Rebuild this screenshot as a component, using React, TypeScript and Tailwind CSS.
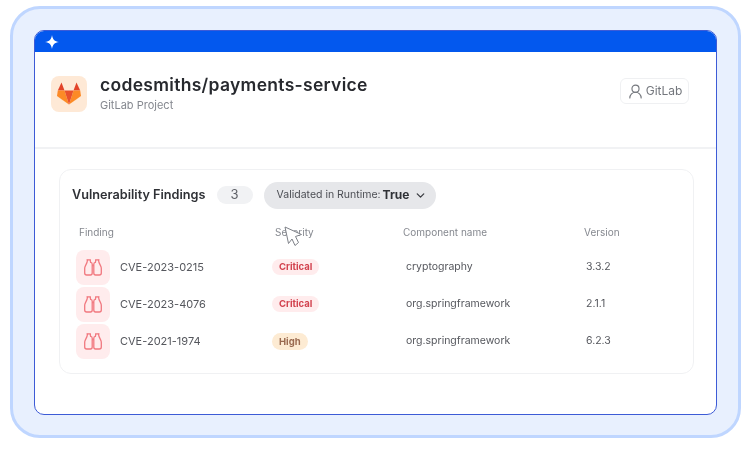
import { ChevronDown, UserRound } from 'lucide-react';

const findings = [
  { id: 'CVE-2023-0215', severity: 'Critical', component: 'cryptography', version: '3.3.2' },
  { id: 'CVE-2023-4076', severity: 'Critical', component: 'org.springframework', version: '2.1.1' },
  { id: 'CVE-2021-1974', severity: 'High', component: 'org.springframework', version: '6.2.3' },
];

function GitLabLogo() {
  return (
    <svg width="24" height="23" viewBox="0 0 24 23">
      <path d="M4.5 0.5 L7.5 8.5 L0.8 8.5 Z" fill="#e24329" />
      <path d="M19.5 0.5 L16.5 8.5 L23.2 8.5 Z" fill="#e24329" />
      <path d="M0.8 8.5 L7.5 8.5 L12 22.5 L0 14 Z" fill="#fc8a26" />
      <path d="M23.2 8.5 L16.5 8.5 L12 22.5 L24 14 Z" fill="#fc8a26" />
      <path d="M0 14 L4 17 L12 22.5 Z" fill="#fca326" />
      <path d="M24 14 L20 17 L12 22.5 Z" fill="#fca326" />
      <path d="M7.5 8.5 L16.5 8.5 L12 22.5 Z" fill="#e8502b" />
    </svg>
  );
}

function Binoculars() {
  return (
    <svg width="18" height="17" viewBox="0 0 18 17" fill="none" stroke="#f1787f" strokeWidth="1.3" strokeLinejoin="round">
      <path d="M3 0.8 H6.4 M11.6 0.8 H15" strokeLinecap="round" />
      <path d="M3.6 0.8 Q3.4 3.6 1.4 6.8 Q0.7 8 0.7 9.4 V14 Q0.7 16 2.7 16 H6.4 Q8.2 16 8.2 14 V5.2 Q8.2 3.6 6.6 3.4 L6.2 0.8" />
      <path d="M14.4 0.8 Q14.6 3.6 16.6 6.8 Q17.3 8 17.3 9.4 V14 Q17.3 16 15.3 16 H11.6 Q9.8 16 9.8 14 V5.2 Q9.8 3.6 11.4 3.4 L11.8 0.8" />
      <path d="M8.2 6.5 H9.8" />
    </svg>
  );
}

function Cursor() {
  return (
    <svg width="19" height="21" viewBox="0 0 19 21" fill="#ffffff" stroke="#7d8087" strokeWidth="1" strokeLinejoin="round">
      <path d="M1 1 L17.5 8.5 L11.5 10.5 L14.5 16.5 L11 19.5 L8 13 L4.5 17.5 Z" />
    </svg>
  );
}

function Star() {
  return (
    <svg width="14" height="14" viewBox="0 0 14 14" fill="#ffffff">
      <path d="M7 0 C7.6 4.4 9.6 6.4 14 7 C9.6 7.6 7.6 9.6 7 14 C6.4 9.6 4.4 7.6 0 7 C4.4 6.4 6.4 4.4 7 0 Z" />
    </svg>
  );
}

export default function App() {
  return (
    <div className="w-[753px] h-[451px] bg-white pl-[10px] pt-[6px] overflow-hidden font-['Inter',sans-serif]">
      <div className="w-[731px] h-[432px] rounded-[30px] border-[3px] border-[#bfd6ff] bg-[#e8f0fe] p-[21px]">
        <div className="h-[385px] w-[683px] rounded-[10px] border border-[#3d5bd6] bg-white overflow-hidden">
          <div className="h-[21px] bg-[#0358ee] pl-[10px] flex items-center">
            <Star />
          </div>

          <div className="blur-[0.3px]">
            <div className="h-[97px] border-b-2 border-[#f1f2f4] pl-4 pr-[27px] pt-[23px] flex items-start justify-between">
              <div className="flex items-center gap-[13px]">
                <div className="w-9 h-9 rounded-lg bg-[#fee9d6] flex items-center justify-center">
                  <GitLabLogo />
                </div>
                <div>
                  <div className="text-[17.5px] leading-[20px] font-semibold text-[#27292e] tracking-[0.3px]">codesmiths/payments-service</div>
                  <div className="text-[11px] leading-[14px] mt-[3px] text-[#85888f]">GitLab Project</div>
                </div>
              </div>
              <div className="mt-[3px] h-[26px] w-[69px] rounded-md border border-[#eff0f2] flex items-center justify-center gap-[2px] text-[12px] text-[#74777d]">
                <UserRound size={17} strokeWidth={1.6} />
                GitLab
              </div>
            </div>

            <div className="px-6 pt-5">
              <div className="relative h-[205px] w-[635px] rounded-xl border-[1.5px] border-[#f0f1f3] pl-[12px] pr-3 pt-[11.5px]">
                <div className="flex items-center h-[27px]">
                  <span className="text-[12.7px] font-semibold text-[#2f3136]">Vulnerability Findings</span>
                  <span className="ml-[11px] w-9 h-[18px] rounded-full bg-[#f1f2f4] flex items-center justify-center text-[13px] text-[#5f6167]">3</span>
                  <div className="ml-[11px] w-[172px] h-[27px] rounded-full bg-[#e6e7ea] flex items-center pl-[13px] text-[10.5px] text-[#4c4e54]">
                    Validated in Runtime:
                    <span className="ml-[2px] text-[12px] font-bold text-[#2f3136]">True</span>
                    <ChevronDown size={13} strokeWidth={2.4} className="ml-[5px] text-[#3a3c42]" />
                  </div>
                </div>

                <div className="grid grid-cols-[196px_128px_181px_1fr] mt-[15px] pl-[7px] h-[18px] items-center text-[10px] text-[#85888f]">
                  <span>Finding</span>
                  <span>Severity</span>
                  <span>Component name</span>
                  <span>Version</span>
                </div>

                <div className="flex flex-col gap-[2px] mt-[8px]">
                  {findings.map((f) => (
                    <div key={f.id} className="grid grid-cols-[196px_134px_180px_1fr] h-[35px] pl-[4px] items-center">
                      <div className="flex items-center gap-[10px]">
                        <div className="w-[34px] h-[35px] rounded-lg bg-[#ffeced] flex items-center justify-center">
                          <Binoculars />
                        </div>
                        <span className="text-[11px] text-[#55575d]">{f.id}</span>
                      </div>
                      <div className="flex items-center">
                        {f.severity === 'Critical' ? (
                          <span className="h-4 leading-4 px-[7px] rounded-full bg-[#ffeced] text-[9.5px] font-bold text-[#d2434f]">Critical</span>
                        ) : (
                          <span className="h-[17px] leading-[17px] px-[7px] rounded-full bg-[#fdebd3] text-[9.5px] font-bold text-[#9a6a50]">High</span>
                        )}
                      </div>
                      <span className="text-[10.5px] text-[#55575d]">{f.component}</span>
                      <span className="text-[10.5px] text-[#55575d]">{f.version}</span>
                    </div>
                  ))}
                </div>

                <div className="absolute left-[224px] top-[56px]">
                  <Cursor />
                </div>
              </div>
            </div>
          </div>
        </div>
      </div>
    </div>
  );
}
